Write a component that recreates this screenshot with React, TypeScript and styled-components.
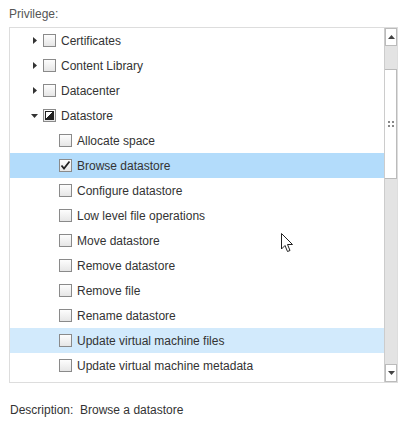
import React from "react";
import styled, { createGlobalStyle } from "styled-components";

const G = createGlobalStyle`
  body { margin: 0; background: #fff; font-family: "Liberation Sans", Arial, sans-serif; font-size: 12px; color: #333; }
`;
const Page = styled.div` padding: 6px 8px 0 9px; width: 406px; box-sizing: border-box; `;
const Label = styled.div` color: #555; height: 21px; line-height: 16px; `;
const Box = styled.div` width: 389px; height: 356px; border: 1px solid #ddd; box-sizing: border-box; display: flex; position: relative; `;
const List = styled.div` flex: 1; overflow: hidden; `;
const Row = styled.div<{ $bg?: string; $indent: number }>`
  height: 25px; display: flex; align-items: center; background: ${p => p.$bg || "transparent"};
  padding-left: ${p => p.$indent}px; gap: 5px; color: #333;
`;
const Arrow = styled.span` width: 7px; display: flex; justify-content: center; `;
const Check = styled.span`
  width: 13px; height: 13px; box-sizing: border-box; border: 1px solid #8a8a8a;
  background: linear-gradient(#fdfdfd, #e6e6e6); display: flex; align-items: center; justify-content: center;
`;
const Partial = styled.span` width: 7px; height: 7px; background: linear-gradient(135deg,#fff 50%,#222 50%); border: 1px solid #222; `;
const Bar = styled.div` width: 12px; border-left: 1px solid #ccc; display: flex; flex-direction: column; background: #e3e3e3; `;
const Btn = styled.div` height: 18px; background: #fff; border: 1px solid #bbb; box-sizing: border-box; display: flex; align-items: center; justify-content: center; `;
const Thumb = styled.div` margin-top: 23px; height: 110px; background: #fff; border: 1px solid #bbb; border-left: none; box-sizing: border-box; display: flex; align-items: center; justify-content: center; `;
const Track = styled.div` flex: 1; `;
const Cursor = styled.svg` position: absolute; left: 271px; top: 205px; `;
const Desc = styled.div` margin-top: 20px; padding-left: 1px; `;

const Tri = ({ down }: { down?: boolean }) => (
  <svg width="7" height="7" viewBox="0 0 7 7">
    {down ? <polygon points="0,2 7,2 3.5,6" fill="#333" /> : <polygon points="2,0 6,3.5 2,7" fill="#333" />}
  </svg>
);

type It = { t: string; lvl: 0 | 1; exp?: "c" | "o"; st?: "p" | "c"; bg?: string };
const items: It[] = [
  { t: "Certificates", lvl: 0, exp: "c" },
  { t: "Content Library", lvl: 0, exp: "c" },
  { t: "Datacenter", lvl: 0, exp: "c" },
  { t: "Datastore", lvl: 0, exp: "o", st: "p" },
  { t: "Allocate space", lvl: 1 },
  { t: "Browse datastore", lvl: 1, st: "c", bg: "#b3dcfb" },
  { t: "Configure datastore", lvl: 1 },
  { t: "Low level file operations", lvl: 1 },
  { t: "Move datastore", lvl: 1 },
  { t: "Remove datastore", lvl: 1 },
  { t: "Remove file", lvl: 1 },
  { t: "Rename datastore", lvl: 1 },
  { t: "Update virtual machine files", lvl: 1, bg: "#d2eafc" },
  { t: "Update virtual machine metadata", lvl: 1 },
];

export default function App() {
  return (
    <Page>
      <G />
      <Label>Privilege:</Label>
      <Box>
        <List>
          {items.map(i => (
            <Row key={i.t} $indent={i.lvl ? 49 : 21} $bg={i.bg}>
              {i.lvl === 0 && <Arrow><Tri down={i.exp === "o"} /></Arrow>}
              <Check>
                {i.st === "p" && <Partial />}
                {i.st === "c" && (
                  <svg width="11" height="11" viewBox="0 0 11 11"><path d="M1.5 5.5 L4 8.5 L9.5 1.5" stroke="#222" strokeWidth="1.8" fill="none" /></svg>
                )}
              </Check>
              <span>{i.t}</span>
            </Row>
          ))}
        </List>
        <Bar>
          <Btn><svg width="7" height="4"><polygon points="0,4 7,4 3.5,0" fill="#444" /></svg></Btn>
          <Thumb>
            <svg width="6" height="6"><rect x="0" y="0" width="2" height="2" fill="#888"/><rect x="4" y="0" width="2" height="2" fill="#888"/><rect x="0" y="4" width="2" height="2" fill="#888"/><rect x="4" y="4" width="2" height="2" fill="#888"/></svg>
          </Thumb>
          <Track />
          <Btn><svg width="7" height="4"><polygon points="0,0 7,0 3.5,4" fill="#444" /></svg></Btn>
        </Bar>
        <Cursor width="13" height="20" viewBox="0 0 13 20">
          <path d="M0.5 0.5 L0.5 16 L4 12.5 L6.5 18.5 L9 17.5 L6.5 11.5 L11.5 11.5 Z" fill="#fff" stroke="#222" strokeWidth="1" />
        </Cursor>
      </Box>
      <Desc>Description:&nbsp; Browse a datastore</Desc>
    </Page>
  );
}
